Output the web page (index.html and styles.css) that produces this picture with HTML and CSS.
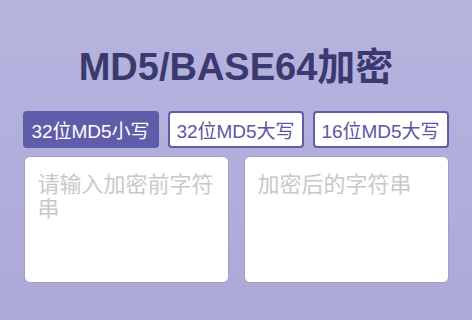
FILE: index.html
```html
<!DOCTYPE html>
<html lang="zh">
<head>
<meta charset="utf-8">
<link rel="stylesheet" href="styles.css">
</head>
<body>
<div class="page">
  <h1 class="title">MD5/BASE64加密</h1>
  <div class="tabs">
    <button class="tab active">32位MD5小写</button>
    <button class="tab">32位MD5大写</button>
    <button class="tab">16位MD5大写</button>
  </div>
  <div class="boxes">
    <textarea class="box" placeholder="请输入加密前字符串"></textarea>
    <textarea class="box" placeholder="加密后的字符串"></textarea>
  </div>
</div>
</body>
</html>
```
FILE: styles.css
```css
html, body {
  margin: 0;
  padding: 0;
  height: 100%;
}
body {
  background: linear-gradient(180deg, #b6b4df 0%, #aca9d7 100%);
  font-family: "Liberation Sans", "Noto Sans CJK SC", sans-serif;
}
.page {
  width: 427px;
  margin: 0 auto;
  padding-top: 38px;
  display: flex;
  flex-direction: column;
  align-items: stretch;
}
.title {
  margin: 0;
  text-align: center;
  font-size: 38px;
  line-height: 58px;
  font-weight: 700;
  color: #3b3a70;
}
.tabs {
  margin-top: 15px;
  display: flex;
  gap: 9px;
}
.tab {
  flex: 0 0 auto;
  width: 136px;
  height: 37px;
  padding: 0;
  border: 2px solid #5f5ca9;
  border-radius: 4px;
  background: #fff;
  color: #5a57a5;
  font-family: inherit;
  font-size: 19px;
}
.tab.active {
  background: #5f5ca9;
  color: #fff;
}
.boxes {
  margin-top: 8px;
  display: flex;
  gap: 15px;
  padding: 0 1px;
}
.box {
  flex: 1 1 0;
  min-width: 0;
  height: 127px;
  box-sizing: border-box;
  border: 1px solid #a29ec8;
  border-radius: 6px;
  background: #fff;
  padding: 13px 8px 10px 13px;
  font-family: "Noto Sans CJK SC", sans-serif;
  font-size: 22px;
  line-height: 24px;
  resize: none;
  outline: none;
}
.box::placeholder {
  color: #c9c9c9;
}
```
